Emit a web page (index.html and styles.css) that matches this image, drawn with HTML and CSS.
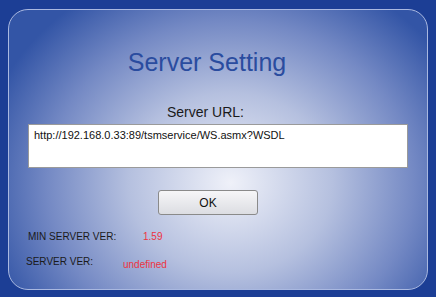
FILE: index.html
```html
<!DOCTYPE html>
<html lang="en">
<head>
  <meta charset="UTF-8" />
  <title>Server Setting</title>
  <link rel="stylesheet" href="styles.css">
</head>
<body>
  <div class="panel">
    <h1 class="title">Server Setting</h1>
    <div class="url-label">Server URL:</div>
    <div class="url-box">http://192.168.0.33:89/tsmservice/WS.asmx?WSDL</div>
    <button class="ok-btn">OK</button>
    <div class="info-row min-ver">
      <span class="info-label">MIN SERVER VER:</span>
      <span class="info-value">1.59</span>
    </div>
    <div class="info-row cur-ver">
      <span class="info-label">SERVER VER:</span>
      <span class="info-value">undefined</span>
    </div>
  </div>
</body>
</html>
```

FILE: styles.css
```css
html, body {
  margin: 0;
  padding: 0;
  height: 100%;
  font-family: 'Liberation Sans', Arial, sans-serif;
  background: #1c3e95;
  overflow: hidden;
}

body {
  padding: 9px 8px 0 8px;
  box-sizing: border-box;
}

.panel {
  width: 420px;
  height: 281px;
  box-sizing: border-box;
  border: 1px solid #a9b8e0;
  border-radius: 20px;
  background: radial-gradient(ellipse 255px 225px at 53% 62%, #eff1f9 0%, #b5c0df 40%, #7489c4 72%, #3355a6 100%);
  display: flex;
  flex-direction: column;
  align-items: center;
}

.title {
  margin: 38px 0 0 -22px;
  font-size: 25px;
  font-weight: normal;
  color: #2a4c9f;
  line-height: 28px;
}

.url-label {
  margin: 28px 0 0 -25px;
  font-size: 14px;
  color: #1a1a1a;
}

.url-box {
  align-self: flex-start;
  margin: 4px 0 0 19px;
  width: 380px;
  height: 44px;
  box-sizing: border-box;
  background: #fff;
  border: 1px solid #9a9a9a;
  padding: 4px 5px;
  font-size: 11px;
  color: #111;
}

.ok-btn {
  margin: 22px 0 0 -20px;
  width: 100px;
  height: 25px;
  border: 1px solid #8a8a8a;
  border-radius: 3px;
  background: linear-gradient(#f6f6f8, #dcdde2);
  font-family: inherit;
  font-size: 12px;
  color: #111;
  padding: 0;
}

.info-row {
  align-self: flex-start;
  display: flex;
  font-size: 10px;
  color: #1a1a1a;
}

.info-value {
  color: #ee3340;
}

.min-ver {
  margin: 16px 0 0 19px;
}

.min-ver .info-label {
  width: 115px;
}

.cur-ver {
  margin: 14px 0 0 17px;
}

.cur-ver .info-label {
  width: 97px;
}

.cur-ver .info-value {
  margin-top: 3px;
}
```
